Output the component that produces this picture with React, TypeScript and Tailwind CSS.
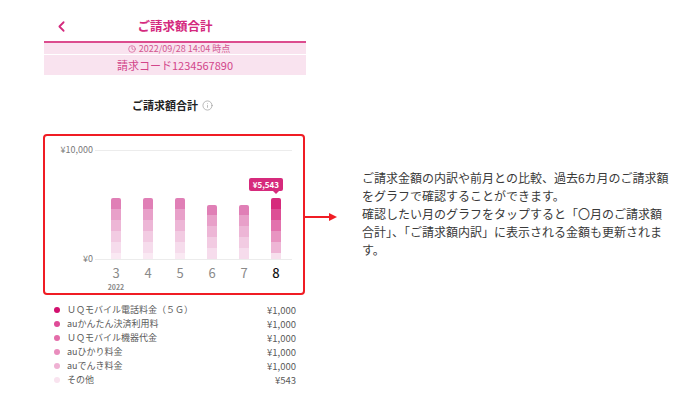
import { ChevronLeft, Clock, Info } from 'lucide-react';

const font = { fontFamily: '"Noto Sans CJK JP", "Noto Sans", sans-serif' };

const mutedColors = ['#e07fb6', '#e8a0c9', '#edb6d6', '#f2cbe2', '#f6dcec', '#fae9f3'];
const activeColors = ['#d62a7c', '#dd4e95', '#e272ad', '#e894c1', '#eeb5d5', '#f7e0ed'];

interface Month {
    label: string;
    segments: number[];
    active?: boolean;
}

const months: Month[] = [
    { label: '3', segments: [11, 11, 11, 11, 11, 6] },
    { label: '4', segments: [11, 11, 11, 11, 11, 6] },
    { label: '5', segments: [11, 11, 11, 11, 11, 6] },
    { label: '6', segments: [10, 11, 11, 11, 11] },
    { label: '7', segments: [10, 11, 11, 11, 11] },
    { label: '8', segments: [11, 11, 11, 11, 11, 6], active: true },
];

const legend = [
    { name: 'ＵＱモバイル電話料金（５Ｇ）', amount: '¥1,000', color: '#d20f6e' },
    { name: 'auかんたん決済利用料', amount: '¥1,000', color: '#df4b97' },
    { name: 'ＵＱモバイル機器代金', amount: '¥1,000', color: '#e46ca9' },
    { name: 'auひかり料金', amount: '¥1,000', color: '#e98dbd' },
    { name: 'auでんき料金', amount: '¥1,000', color: '#efb1d3' },
    { name: 'その他', amount: '¥543', color: '#f9e3ef' },
];

function Bar({ month }: { month: Month }) {
    const colors = month.active ? activeColors : mutedColors;
    return (
        <div className="relative flex w-[10px] flex-col overflow-hidden rounded-t-[2px]">
            {month.segments.map((h, i) => (
                <div key={i} style={{ height: h, backgroundColor: colors[i] }} />
            ))}
        </div>
    );
}

export default function App() {
    return (
        <div className="flex h-[404px] w-[690px] bg-white" style={font}>
            {/* Phone screen */}
            <div className="ml-[44px] flex w-[262px] flex-col pt-[11px]">
                {/* Header */}
                <div className="relative flex h-[30px] items-center justify-center">
                    <ChevronLeft className="absolute left-[9px] text-[#d42a7e]" size={17} strokeWidth={2.5} />
                    <span className="text-[12.5px] font-bold text-[#d42a7e]">ご請求額合計</span>
                </div>
                <div className="h-[2px] bg-[#dc4c8e]" />
                <div className="flex h-[11px] items-center justify-center gap-[3px] bg-[#f9e3ef] pl-[8px] text-[9px] leading-none text-[#d2558f]">
                    <Clock size={8} strokeWidth={2} />
                    <span>2022/09/28 14:04 時点</span>
                </div>
                <div className="h-px bg-white" />
                <div className="flex h-[20px] items-center justify-center bg-[#f9e3ef] text-[11px] text-[#d2458a]">
                    請求コード1234567890
                </div>

                {/* Section title */}
                <div className="mt-[22px] flex h-[16px] items-center justify-center gap-[4px] pr-[5px]">
                    <span className="text-[11px] font-bold text-[#222]">ご請求額合計</span>
                    <Info size={11} strokeWidth={1.5} className="text-[#9a9a9a]" />
                </div>

                {/* Chart box */}
                <div className="relative mt-[21px] h-[161px] -ml-px w-[262px] rounded-[4px] border-2 border-[#f01c24]">
                    {/* Arrow to description */}
                    <div className="absolute left-full top-[77px] flex items-center">
                        <div className="h-[2px] w-[26px] bg-[#f01c24]" />
                        <div className="h-0 w-0 border-y-[4px] border-l-[8px] border-y-transparent border-l-[#f01c24]" />
                    </div>

                    <div className="flex pt-[12px]">
                        {/* Y axis */}
                        <div className="relative h-[112px] w-[50px]">
                            <span className="absolute right-[2px] top-[-3px] text-[9px] leading-none text-[#7a7a7a]">¥10,000</span>
                            <span className="absolute right-[2px] top-[106px] text-[9px] leading-none text-[#7a7a7a]">¥0</span>
                        </div>
                        {/* Plot */}
                        <div className="flex w-[197px] flex-col">
                            <div className="relative flex h-[112px] items-end pl-[5px]">
                                <div className="absolute left-0 right-0 top-[2px] h-px bg-[#ececec]" />
                                <div className="absolute bottom-0 left-0 right-0 h-px bg-[#ececec]" />
                                {months.map((m) => (
                                    <div key={m.label} className="relative flex w-[32px] justify-center pb-px">
                                        {m.active && (
                                            <div className="absolute bottom-[66px] right-[9px] flex flex-col items-end">
                                                <div className="rounded-[2px] bg-[#d62a7c] px-[4px] py-[2px] text-[8px] font-bold leading-[9px] text-white">
                                                    ¥5,543
                                                </div>
                                                <div className="mr-[4px] h-0 w-0 border-x-[3px] border-t-[3px] border-x-transparent border-t-[#d62a7c]" />
                                            </div>
                                        )}
                                        <Bar month={m} />
                                    </div>
                                ))}
                            </div>
                            <div className="flex pl-[5px] pt-[5px]">
                                {months.map((m, i) => (
                                    <div key={m.label} className="flex w-[32px] flex-col items-center">
                                        <span
                                            className={
                                                m.active
                                                    ? 'text-[13px] font-medium leading-[16px] text-[#111]'
                                                    : 'text-[13px] leading-[16px] text-[#8a8a8a]'
                                            }
                                        >
                                            {m.label}
                                        </span>
                                        {i === 0 && (
                                            <span className="mt-[3px] text-[7px] font-bold leading-none text-[#888]">2022</span>
                                        )}
                                    </div>
                                ))}
                            </div>
                        </div>
                    </div>
                </div>

                {/* Legend */}
                <div className="mt-[8px] flex flex-col pl-[10px] pr-[10px]">
                    {legend.map((l) => (
                        <div key={l.name} className="flex h-[14px] items-center">
                            <span className="mr-[7px] h-[6px] w-[6px] rounded-full" style={{ backgroundColor: l.color }} />
                            <span className="flex-1 text-[9px] text-[#5a5a5a]">{l.name}</span>
                            <span className="text-[9.5px] text-[#5a5a5a]">{l.amount}</span>
                        </div>
                    ))}
                </div>
            </div>

            {/* Description */}
            <div className="ml-[56px] mt-[169px] w-[320px] text-[12px] leading-[18px] text-[#3a3a3a]">
                ご請求金額の内訳や前月との比較、過去6カ月のご請求額
                <br />
                をグラフで確認することができます。
                <br />
                確認したい月のグラフをタップすると「〇月のご請求額
                <br />
                合計」、「ご請求額内訳」に表示される金額も更新されま
                <br />
                す。
            </div>
        </div>
    );
}
